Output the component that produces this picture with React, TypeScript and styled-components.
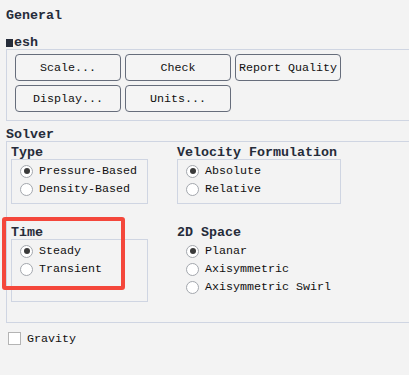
import styled, { createGlobalStyle } from 'styled-components'

const GlobalStyle = createGlobalStyle`
  html, body {
    margin: 0;
    padding: 0;
    background: #f3f3f3;
  }
  * {
    box-sizing: border-box;
  }
`

const TITLE = '#262c3a'
const LINE = '#cfd5e2'

const Page = styled.div`
  position: relative;
  width: 409px;
  height: 375px;
  overflow: hidden;
  background: #f3f3f3;
  font-family: 'Liberation Mono', 'DejaVu Sans Mono', monospace;
  font-size: 11.67px;
  color: #101010;
  padding: 10px 0 0 6px;
`

const Title = styled.div<{ $top?: number }>`
  font-size: 13.33px;
  font-weight: bold;
  line-height: 12px;
  height: 12px;
  color: ${TITLE};
  margin-top: ${(p) => p.$top ?? 0}px;
  white-space: nowrap;
`

// the first letter of "Mesh" shows as a solid block in the reference
const Mark = styled.span`
  display: inline-block;
  width: 7px;
  height: 8px;
  line-height: 8px;
  font-size: 11px;
  text-align: center;
  background: ${TITLE};
  color: ${TITLE};
  vertical-align: baseline;
  margin-right: 1px;
`

const Frame = styled.div`
  border: 1px solid ${LINE};
  border-right: none;
  margin-right: -20px;
`

const MeshFrame = styled(Frame)`
  padding: 4px 0 8px 8px;
`

const ButtonGrid = styled.div`
  display: grid;
  grid-template-columns: repeat(3, 106px);
  grid-auto-rows: 27px;
  gap: 4px;
`

const Button = styled.button`
  font: inherit;
  color: #101010;
  background: #f4f4f4;
  border: 1px solid #666d7b;
  border-radius: 4px;
  padding: 0;
  white-space: nowrap;
`

const SolverFrame = styled(Frame)`
  padding: 5px 0 20px 4px;
`

const SolverGrid = styled.div`
  display: grid;
  grid-template-columns: 137px 164px;
  column-gap: 29px;
  row-gap: 23px;
`

const Group = styled.div`
  display: flex;
  flex-direction: column;
`

const GroupBox = styled.div<{ $hidden?: boolean }>`
  flex: 1;
  border: 1px solid ${(p) => (p.$hidden ? 'transparent' : LINE)};
  padding: 2px 0 5px 8px;
`

const RadioRow = styled.label`
  display: flex;
  align-items: center;
  gap: 6px;
  height: 18px;
  white-space: nowrap;
`

const RadioDot = styled.span<{ $on?: boolean }>`
  width: 13px;
  height: 13px;
  border-radius: 50%;
  border: 1px solid #a3a7ad;
  background: #fff;
  display: flex;
  align-items: center;
  justify-content: center;
  flex-shrink: 0;
  &::after {
    content: '';
    width: 6px;
    height: 6px;
    border-radius: 50%;
    background: ${(p) => (p.$on ? '#3a3a3a' : 'transparent')};
  }
`

const CheckRow = styled.label`
  display: flex;
  align-items: center;
  gap: 6px;
  height: 13px;
  margin: 9px 0 0 2px;
`

const CheckBox = styled.span`
  width: 13px;
  height: 13px;
  background: #fff;
  border: 1px solid #b4b4b4;
`

const Highlight = styled.div`
  position: absolute;
  left: 2px;
  top: 217px;
  width: 123px;
  height: 73px;
  border: 4px solid #f4473b;
  border-radius: 3px;
  pointer-events: none;
`

const Radio = ({ label, on }: { label: string; on?: boolean }) => (
  <RadioRow>
    <RadioDot $on={on} />
    {label}
  </RadioRow>
)

const RadioGroup = ({
  title,
  options,
  hidden,
}: {
  title: string
  options: string[]
  hidden?: boolean
}) => (
  <Group>
    <Title>{title}</Title>
    <GroupBox $hidden={hidden}>
      {options.map((o, i) => (
        <Radio key={o} label={o} on={i === 0} />
      ))}
    </GroupBox>
  </Group>
)

const App = () => {
  return (
    <Page>
      <GlobalStyle />
      <Title>General</Title>
      <Title $top={15}>
        <Mark>M</Mark>esh
      </Title>
      <MeshFrame>
        <ButtonGrid>
          <Button>Scale...</Button>
          <Button>Check</Button>
          <Button>Report Quality</Button>
          <Button>Display...</Button>
          <Button>Units...</Button>
        </ButtonGrid>
      </MeshFrame>
      <Title $top={8}>Solver</Title>
      <SolverFrame>
        <SolverGrid>
          <RadioGroup title="Type" options={['Pressure-Based', 'Density-Based']} />
          <RadioGroup title="Velocity Formulation" options={['Absolute', 'Relative']} />
          <RadioGroup title="Time" options={['Steady', 'Transient']} />
          <RadioGroup
            title="2D Space"
            options={['Planar', 'Axisymmetric', 'Axisymmetric Swirl']}
            hidden
          />
        </SolverGrid>
      </SolverFrame>
      <CheckRow>
        <CheckBox />
        Gravity
      </CheckRow>
      <Highlight />
    </Page>
  )
}

export default App
